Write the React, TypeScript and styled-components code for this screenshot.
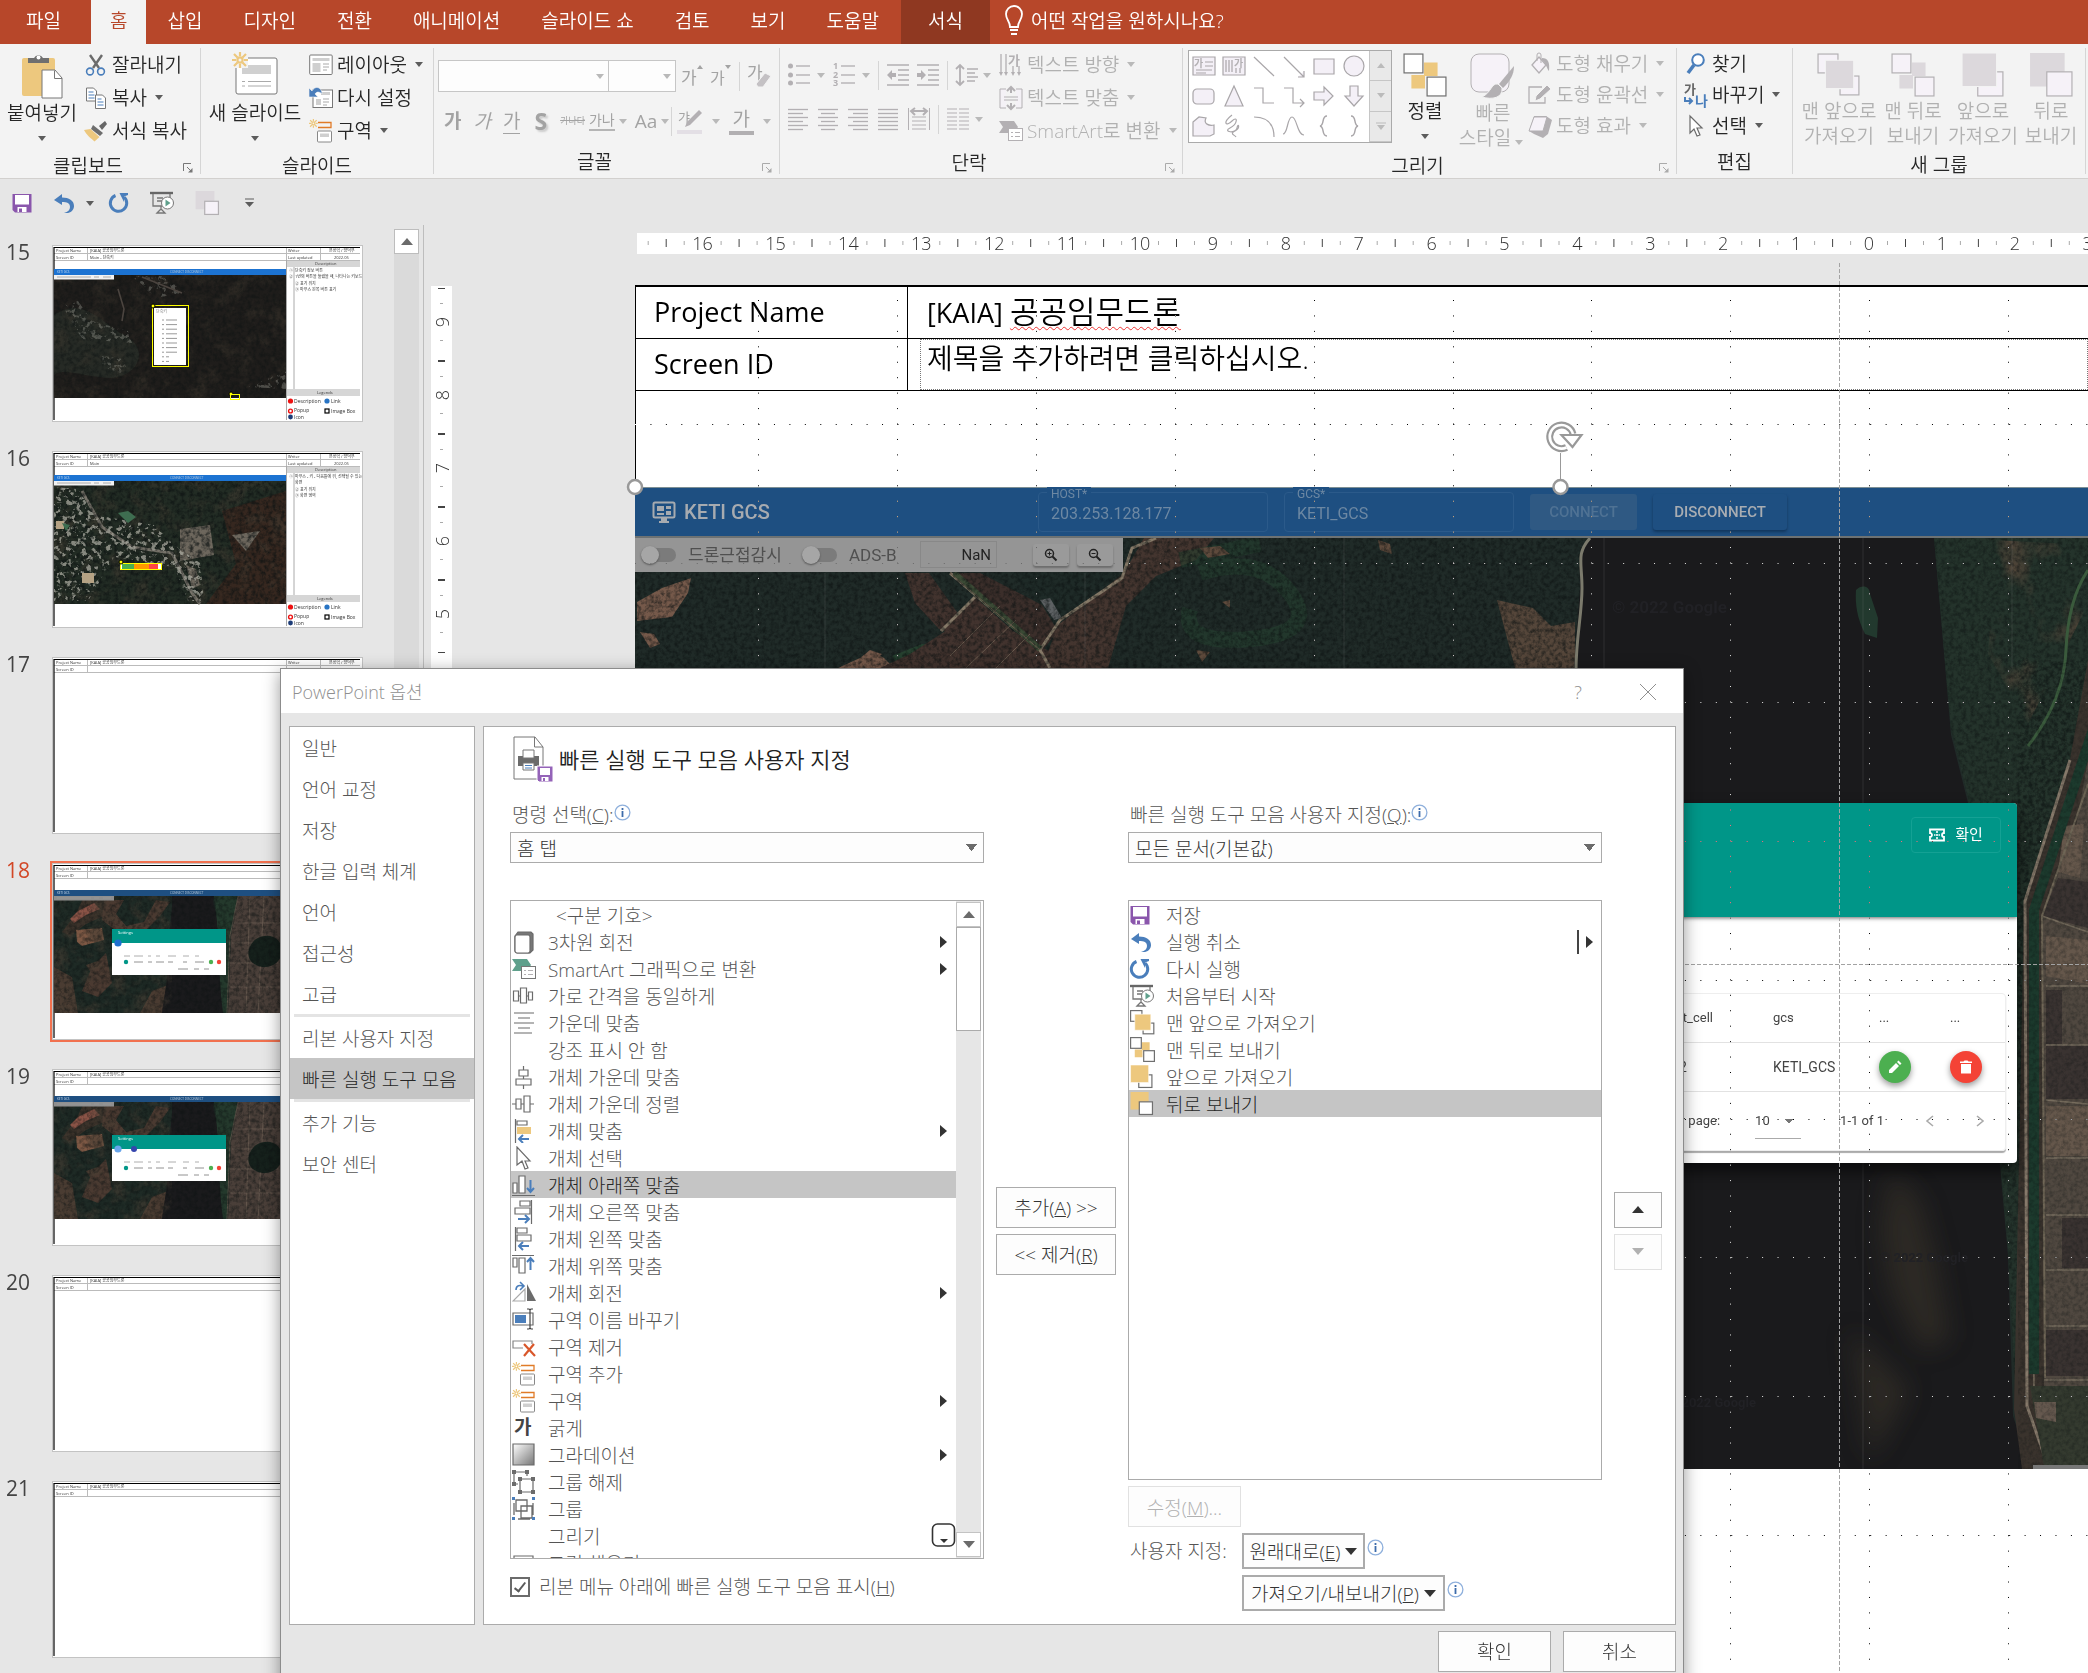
import React from "react";
import styled, { createGlobalStyle, css } from "styled-components";

const ink = "#262626";
const off = "#b1b1b1";
const blue = "#4a7ebb";
const gold = "#edc87e";
const line = "#ababab";

const GlobalStyle = createGlobalStyle`
  *, *::before, *::after { box-sizing: border-box; }
  body {
    margin: 0;
    overflow: hidden;
    background: #e6e6e6;
    color: ${ink};
    font-family: "Open Sans", "Noto Sans CJK KR", sans-serif;
    font-size: 19px;
    font-weight: 300;
    line-height: 24px;
  }
  button, input, select { font: inherit; color: inherit; }
  button { background: none; border: 0; padding: 0; margin: 0; white-space: nowrap; }
  ul, ol { list-style: none; margin: 0; padding: 0; }
  svg { display: block; flex: none; }
`;

/* ---------- frame ---------- */

const Window = styled.div`
  position: relative;
  display: flex;
  flex-direction: column;
  height: 100vh;
  overflow: hidden;
`;

const TabBar = styled.nav`
  display: flex;
  flex: none;
  height: 44px;
  background: #b7472a;
  font-weight: 350;
`;

const Tab = styled.button<{ $look?: "active" | "context" | "first" }>`
  padding: 0 20px 3px 21px;
  color: #fff;
  ${(p) => p.$look === "first" && css`width: 91px; padding-left: 16px;`}
  ${(p) => p.$look === "active" && css`background: #f3f3f3; color: #b7472a; padding-left: 19px; padding-right: 19px;`}
  ${(p) => p.$look === "context" && css`background: #8f3821; padding-left: 27px; padding-right: 27px; margin-left: 2px;`}
`;

const TellMe = styled.button`
  display: flex;
  align-items: center;
  gap: 7px;
  padding: 0 14px 3px;
  color: #fff;
`;

const Ribbon = styled.div`
  display: flex;
  flex: none;
  height: 135px;
  background: #f3f3f3;
  border-bottom: 1px solid #d2d0ce;
  overflow: hidden;
  font-weight: 350;
`;

const Group = styled.section<{ $w: number }>`
  position: relative;
  display: flex;
  flex-direction: column;
  flex: none;
  width: ${(p) => p.$w}px;
  margin: 4px 0;
  border-right: 1px solid #d5d5d5;
`;

const GroupBody = styled.div<{ $pad?: number }>`
  display: flex;
  height: 102px;
  padding-left: ${(p) => p.$pad ?? 0}px;
`;

const GroupName = styled.div<{ $launch?: boolean }>`
  text-align: center;
  line-height: 24px;
  padding: 4px ${(p) => (p.$launch ? 24 : 0)}px 0 0;
`;

const Launcher = styled.button`
  position: absolute;
  right: 7px;
  bottom: 1px;
`;

const Big = styled.button<{ $w: number; $off?: boolean }>`
  display: flex;
  flex-direction: column;
  align-items: center;
  width: ${(p) => p.$w}px;
  padding-top: 5px;
  line-height: 25px;
  color: ${(p) => (p.$off ? off : ink)};
  svg { margin-bottom: 2px; }
`;

const Stack = styled.div<{ $row?: number }>`
  display: grid;
  grid-auto-rows: ${(p) => p.$row ?? 33}px;
  align-content: start;
`;

const Small = styled.button<{ $off?: boolean }>`
  display: flex;
  align-items: center;
  gap: 4px;
  color: ${(p) => (p.$off ? off : ink)};
  svg { min-width: 24px; }
`;

const CaretBox = styled.span<{ $off?: boolean }>`
  display: inline-block;
  width: 0;
  height: 0;
  margin: 0 4px;
  border: 4px solid transparent;
  border-bottom-width: 0;
  border-top: 5px solid ${(p) => (p.$off ? "#b9b9b9" : "#5c5c5c")};
`;
const BigCaret = styled.span`
  display: flex;
  height: 24px;
  align-items: center;
  justify-content: center;
`;

const Tools = styled.div<{ $w?: number }>`
  display: flex;
  flex-direction: column;
  width: ${(p) => (p.$w ? `${p.$w}px` : "auto")};
`;

const ToolRow = styled.div<{ $h: number; $gap: number; $pad?: number }>`
  display: flex;
  align-items: center;
  height: ${(p) => p.$h}px;
  gap: ${(p) => p.$gap}px;
  padding-left: ${(p) => p.$pad ?? 0}px;
`;

const Rule = styled.span`
  width: 1px;
  height: 29px;
  background: #d5d5d5;
`;

const Glyph = styled.button<{ $kind?: "italic" | "under" | "shadow" | "bold" | "strike" | "arrows" | "bar" }>`
  color: #a3a3a3;
  font-weight: 400;
  line-height: 24px;
  ${(p) => p.$kind === "italic" && css`font-style: italic;`}
  ${(p) => p.$kind === "under" && css`border-bottom: 1px solid #a3a3a3;`}
  ${(p) => p.$kind === "bold" && css`font-weight: 700;`}
  ${(p) => p.$kind === "shadow" && css`font-size: 23px; font-weight: 700; text-shadow: 2px 2px 2px #ccc; padding: 0 1px 0 2px;`}
  ${(p) => p.$kind === "strike" && css`font-size: 9px; text-decoration: line-through;`}
  ${(p) => p.$kind === "arrows" && css`font-size: 14px; line-height: 18px; border-bottom: 2px solid #b5b5b5;`}
  ${(p) => p.$kind === "bar" && css`padding: 0 4px; border-bottom: 4px solid #b1afb1;`}
`;

const FontBoxes = styled.div`
  display: flex;
`;
const FontSelect = styled.div<{ $w: number }>`
  display: flex;
  align-items: center;
  width: ${(p) => p.$w}px;
  height: 32px;
  margin-right: -1px;
  border: 1px solid #c6c6c6;
  background: #fdfdfd;
  input { flex: 1; min-width: 0; height: 28px; border: 0; background: none; }
`;

const Gallery = styled.div`
  display: flex;
  width: 204px;
  height: 93px;
  margin-top: 2px;
  border: 1px solid #aaa;
  background: #fff;
`;
const GalleryGrid = styled.div`
  display: grid;
  flex: 1;
  grid-template-columns: repeat(6, 30px);
  grid-auto-rows: 30px;
  place-items: center;
`;
const GalleryScroll = styled.div`
  display: grid;
  width: 22px;
  grid-template-rows: repeat(3, 1fr);
  background: #e9e9e9;
  border-left: 1px solid #c6c6c6;
  button { display: grid; place-items: center; border-bottom: 1px solid #c6c6c6; }
`;

const QuickBar = styled.div`
  display: flex;
  flex: none;
  align-items: center;
  height: 46px;
  padding: 2px 12px 0;
  gap: 21px;
`;

const UndoPair = styled.span`
  display: flex;
  align-items: center;
  gap: 7px;
  margin-right: -10px;
`;

/* ---------- icons ---------- */

type SProps = { w: number; h: number; children: React.ReactNode; vb?: string };
const S = ({ w, h, vb, children }: SProps) => (
  <svg width={w} height={h} viewBox={vb ?? `0 0 ${w} ${h}`} fill="none" overflow="visible" aria-hidden="true">
    {children}
  </svg>
);

const Caret = ({ disabled }: { disabled?: boolean }) => <CaretBox $off={disabled} />;

const LaunchIcon = ({ c = "#777" }) => (
  <S w={10} h={10}>
    <path d="M.5 8V.5H8" stroke={c} />
    <path d="M4 4l4 4" stroke={c} />
    <path d="M9.500 5v4.500H5z" fill={c} />
  </S>
);

const SaveIcon = () => (
  <S w={20} h={20}>
    <path d="M.5 1h19v18.500H3L.5 17z" fill="#8a56ac" />
    <path d="M3 2h14v9.500H3z" fill="#fff" />
    <path d="M5.500 14h9v5h-9z" fill="#fff" />
    <path d="M7 15.500h3V19H7z" fill="#8a56ac" />
  </S>
);
const UndoIcon = () => (
  <S w={22} h={20}>
    <path d="M1 7l8-6v3.500c7 0 12 3 12 8.500 0 3-2 6-6 7h-4c4-1 6-3 6-6 0-4-3-5-8-5V12z" fill={blue} />
  </S>
);
const RedoIcon = () => (
  <S w={20} h={20}>
    <path d="M6.500 2.500A8.200 8.200 0 1 0 15 4" stroke={blue} strokeWidth="3" />
    <path d="M10.500 0H19v2l-4 1.500V9z" fill={blue} />
  </S>
);
const ShowIcon = () => (
  <S w={24} h={22}>
    <path d="M0 1h23" stroke="#666" strokeWidth="2.400" />
    <path d="M3 2v12h9M20 2v4M7 6h6M7 9h5M11 14v4M7 21l4-4 4 4z" stroke="#777" strokeWidth="1.300" />
    <circle cx="17.500" cy="11" r="6" fill="#fff" stroke="#777" />
    <path d="M15.500 7.500l5 3.500-5 3.500z" fill="#5fa08c" />
  </S>
);
const PasteIcon = () => (
  <S w={42} h={46}>
    <rect x="1" y="5" width="33" height="38" rx="2" fill={gold} />
    <path d="M7 10V5h6a5 5 0 0 1 9 0h6v5z" fill="#6f6f6f" />
    <circle cx="17.500" cy="4.500" r="2" fill="#fff" />
    <path d="M21 17h13l7 8v20H21z" fill="#fff" stroke="#777" />
    <path d="M33.500 17.500v8H41" stroke="#777" />
  </S>
);
const CutIcon = () => (
  <S w={22} h={22}>
    <path d="M5 1l9 13M17 1L8 14" stroke="#6b6b6b" strokeWidth="2.400" />
    <circle cx="5" cy="17.500" r="3.400" stroke={blue} strokeWidth="1.600" />
    <circle cx="16" cy="17.500" r="3.400" stroke={blue} strokeWidth="1.600" />
  </S>
);
const CopyIcon = () => (
  <S w={22} h={22}>
    <path d="M1.500 1h7l3 3v10h-10z" fill="#fff" stroke="#777" />
    <path d="M3.500 5h5M3.500 8h6M3.500 11h6" stroke={blue} />
    <path d="M10.500 8h7l3 3v10.500h-10z" fill="#fff" stroke="#777" />
    <path d="M12.500 12h4M12.500 15h6M12.500 18h6" stroke={blue} />
  </S>
);
const BrushIcon = () => (
  <S w={24} h={22}>
    <path d="M15 6l6-5 2 3-5 6z" fill="#666" />
    <path d="M9 5l10 8-3 3L7 9z" fill="#6d6d6d" />
    <path d="M6.500 9l9 8-5 4.500C7 18 3 16 0 10z" fill={gold} />
  </S>
);
const Burst = ({ x = 0, y = 0, s = 1 }) => (
  <g transform={`translate(${x} ${y}) scale(${s})`} stroke={gold} strokeWidth="2.200">
    <circle cx="8" cy="8" r="2.600" />
    <path d="M8 0v4M8 12v4M0 8h4M12 8h4M2 2l3.500 3.500M14 2l-3.500 3.500M2 14l3.500-3.500M14 14l-3.500-3.500" />
  </g>
);
const NewSlideIcon = () => (
  <S w={46} h={46}>
    <rect x="4" y="5" width="41" height="36" rx="2" fill="#fff" stroke="#777" />
    <path d="M10 12h29v9H10z" fill="#d0d0d0" />
    <path d="M10 28.500h3M16 28.500h23M10 33h3M16 33h23" stroke="#aaa" />
    <path d="M0 0h16v15H0z" fill="#f3f3f3" />
    <Burst y={-1} />
  </S>
);
const LayoutIcon = () => (
  <S w={24} h={22}>
    <rect x=".7" y="1" width="22.500" height="19.500" rx="1" fill="#fff" stroke="#777" />
    <path d="M3.500 4h17v3h-17zM3.500 9h8v9h-8z" fill="#cfcfcf" />
    <path d="M14 10h6M14 13h6M14 16h4" stroke="#aaa" />
  </S>
);
const ResetIcon = () => (
  <S w={24} h={22}>
    <rect x="4" y="3" width="19.500" height="17.500" fill="#fff" stroke="#777" />
    <path d="M12 5h9v3h-9zM7 12h5v6H7z" fill="#cfcfcf" />
    <path d="M14 12h6M14 15h6M14 18h4" stroke="#aaa" />
    <path d="M0 1v9h9L6 7c2-3 5-2 7 0 0-7-7-9-10-3z" fill={blue} stroke="#f3f3f3" strokeWidth=".6" />
  </S>
);
const SectionIcon = () => (
  <S w={24} h={24}>
    <Burst s={0.55} />
    <path d="M9 3.500h13v5H9" stroke="#e07b28" strokeWidth="1.300" />
    <rect x="8.500" y="12" width="14" height="11" rx="1" fill="#fff" stroke="#888" />
    <path d="M11 14.500h9v3.500h-9z" fill="#cfcfcf" />
  </S>
);
const grey = "#b3b0b3";
const Lines = ({ rows, w = 22, h = 22, c = grey }: { rows: number[][]; w?: number; h?: number; c?: string }) => (
  <S w={w} h={h}>
    {rows.map(([x1, x2], i) => (
      <path key={i} d={`M${x1} ${1 + i * 4}.500H${x2}`} stroke={c} strokeWidth="1.300" />
    ))}
  </S>
);
const BulletIcon = () => (
  <S w={22} h={24}>
    {[3, 12, 20].map((y) => (
      <g key={y}>
        <circle cx="2.500" cy={y} r="2.500" fill={grey} />
        <path d={`M8 ${y}h14`} stroke={grey} strokeWidth="1.400" />
      </g>
    ))}
  </S>
);
const NumberIcon = () => (
  <S w={22} h={24}>
    {[3, 12, 20].map((y, i) => (
      <g key={y}>
        <text x="0" y={y + 3} fontSize="9" fontWeight="700" fill={grey}>{i + 1}</text>
        <path d={`M8 ${y}h14`} stroke={grey} strokeWidth="1.400" />
      </g>
    ))}
  </S>
);
const IndentIcon = ({ out }: { out?: boolean }) => (
  <S w={22} h={22}>
    <path d="M0 1h22M11 6h11M11 11h11M11 16h11M0 21h22" stroke={grey} strokeWidth="1.300" />
    {out ? <path d="M0 11l5-5v3h4v4H5v3z" fill={grey} /> : <path d="M9 11L4 6v3H0v4h4v3z" fill={grey} />}
  </S>
);
const SpacingIcon = () => (
  <S w={22} h={24}>
    <path d="M4 2v20M0 6l4-4 4 4M0 18l4 4 4-4" stroke={grey} strokeWidth="1.800" />
    <path d="M11 6h11M11 10h8M11 14h11M11 18h8" stroke={grey} strokeWidth="1.300" />
  </S>
);
const SpreadIcon = () => (
  <S w={22} h={24}>
    <path d="M.5 1v22M21.500 1v22M4 10h14M4 14h14M4 18h14M4 22h14" stroke={grey} />
    <path d="M3 4h16M7 1L3 4l4 4M15 1l4 3-4 4" stroke={grey} strokeWidth="2" />
  </S>
);
const ColumnsIcon = () => (
  <S w={22} h={22}>
    {[1, 5, 9, 13, 17, 21].map((y) => (
      <path key={y} d={`M0 ${y}h10M12 ${y}h10`} stroke={grey} strokeWidth="1.200" />
    ))}
  </S>
);
const DirIcon = () => (
  <S w={24} h={24}>
    <path d="M2 1v20M7 1v20M14 13v8M20 13v8" stroke={grey} strokeWidth="1.300" />
    <path d="M0 19l2 4 2-4zM5 19l2 4 2-4zM12 19l2 4 2-4zM18 19l2 4 2-4z" fill={grey} />
    <text x="9" y="12" fontSize="13" fontWeight="700" fill={grey}>가</text>
  </S>
);
const FitIcon = () => (
  <S w={24} h={24}>
    <path d="M7 3H1v19h6M17 3h6v19h-6" stroke={grey} fill="#f4f1f6" />
    <path d="M12 1v6M8 5l4-4 4 4M12 23v-6M8 19l4 4 4-4" stroke={grey} strokeWidth="2" />
    <path d="M5 11h14M5 14h14" stroke={grey} />
  </S>
);
const SmartIcon = ({ c = grey }: { c?: string }) => (
  <S w={24} h={20}>
    <path d="M0 0h15l4 6-4 6H0l4-6z" fill={c} />
    <rect x="9.500" y="7.500" width="14" height="12" fill="#fff" stroke={c === grey ? grey : "#777"} />
    <path d="M12 11.500h2M16 11.500h5M12 15.500h2M16 15.500h5" stroke={grey} />
  </S>
);

type SheetProps = { kind: "align" | "front" | "back" | "forward" | "backward"; dim?: boolean; size?: number };
const SheetIcon = ({ kind, dim, size = 42 }: SheetProps) => {
  const f = dim ? "#dcd8dc" : gold;
  const p = dim ? "#f6f2f8" : "#fff";
  const s = dim ? grey : "#6f6f6f";
  const k = 42 / size;
  const paper = (x: number, y: number, w: number, h: number) => (
    <rect x={x} y={y} width={w} height={h} fill={p} stroke={s} strokeWidth={1.2 * k} />
  );
  return (
    <S w={size} h={size} vb="0 0 42 42">
      {kind === "front" && <>{paper(1, 1, 19, 18)}{paper(22, 22, 18, 18)}<path d="M8 7h27v27H8z" fill={f} stroke={dim ? "#f3f3f3" : "#fff"} /></>}
      {(kind === "back" || kind === "align") && <><path d="M20 9h13v13H20zM8 21h13v13H8z" fill={f} />{paper(1, 1, 18, 18)}{paper(23, 23, 18, 18)}</>}
      {kind === "forward" && <>{paper(16, 18, 24, 23)}<path d="M1 0h33v32H1z" fill={f} stroke={dim ? "#f3f3f3" : "#fff"} /></>}
      {kind === "backward" && <><path d="M1 0h33v32H1z" fill={f} />{paper(17, 18, 24, 23)}</>}
    </S>
  );
};
const StyleIcon = () => (
  <S w={46} h={46}>
    <rect x="1" y="1" width="38" height="38" rx="8" fill="#f6f2f8" stroke={grey} />
    <path d="M44 13L29 31l4 4c7-7 11-13 11-22z" fill={grey} />
    <path d="M28 31c-7-1-6 8-16 13 10 3 21 1 20-9z" fill={grey} stroke="#f3f3f3" />
  </S>
);
const FillIcon = () => (
  <S w={24} h={24}>
    <path d="M4 13L11 5l7 8-7 8z" stroke={grey} fill="#f6f2f8" strokeWidth="1.300" />
    <path d="M9 9V3a2 2 0 0 1 4 0v8" stroke={grey} />
    <path d="M14 6c6 0 8 4 7 13-2-2-2-6-7-11z" fill={grey} />
  </S>
);
const OutlineIcon = () => (
  <S w={24} h={22}>
    <path d="M14 3H1v16h16v-6" stroke={grey} strokeWidth="1.300" />
    <path d="M8 12L19 1l4 4-11 10-5 2z" fill={grey} stroke="#f3f3f3" />
  </S>
);
const EffectIcon = () => (
  <S w={24} h={24}>
    <path d="M6 20L1 17 6 2h12l6 4-4 14-5 4z" fill={grey} />
    <path d="M6 3h13l-4 14H1z" fill="#f6f2f8" stroke={grey} />
  </S>
);
const FindIcon = () => (
  <S w={20} h={22}>
    <circle cx="12" cy="7" r="5.800" stroke={blue} strokeWidth="2" fill="#fff" />
    <path d="M8 12l-6 8" stroke={blue} strokeWidth="3.600" />
  </S>
);
const SwapIcon = () => (
  <S w={24} h={26}>
    <text x="0" y="12" fontSize="13" fontWeight="700" fill="#666">가</text>
    <text x="11" y="24" fontSize="14" fontWeight="700" fill={blue}>나</text>
    <path d="M1 15v4h6M5 16l3 3-3 3" stroke={blue} strokeWidth="2" />
  </S>
);
const CursorIcon = ({ w = 16, h = 24 }) => (
  <S w={w} h={h} vb="0 0 16 24">
    <path d="M2 2v17l4-4 3 7 3-1-3-7h5z" fill="#fff" stroke="#6b6b6b" strokeWidth="1.200" />
  </S>
);

const shapePaths: React.ReactNode[] = [
  <g key="a"><path d="M1 3h22v18H1z" /><path d="M13 8h8M13 12h8M4 16h16M4 19h10" /><text x="2" y="13" fontSize="10" fill={grey} stroke="none" fontWeight="700">가</text></g>,
  <g key="b"><path d="M1 3h22v18H1z" /><path d="M4 6v12M7 6v12M10 6v12M14 14v5M18 14v5" /><text x="12" y="13" fontSize="10" fill={grey} stroke="none" fontWeight="700">가</text></g>,
  <path key="c" d="M2 3l20 19" />,
  <path key="d" d="M2 3l20 20M22 17v6h-6" />,
  <path key="e" d="M2 5h20v15H2z" />,
  <circle key="f" cx="12" cy="12" r="10" />,
  <rect key="g" x="1" y="5" width="21" height="15" rx="4" />,
  <path key="h" d="M12 2l9 20H3z" />,
  <path key="i" d="M2 4h9v15h11" fill="none" />,
  <path key="j" d="M2 4h9v15h11M18 15l4 4-4 4" fill="none" />,
  <path key="k" d="M2 8h10V3l9 9-9 9v-5H2z" />,
  <path key="l" d="M8 2h8v10h5l-9 10-9-10h5z" />,
  <path key="m" d="M1 8l6-5 7 1c-3 6 3 8 8 7v9l-4 2H1z" />,
  <path key="n" d="M10 1c-10 8-6 12 0 6s6 3-2 7 6 6 7 0 4 0-2 3 0 4 1 6" fill="none" />,
  <path key="o" d="M2 3c14 0 20 8 20 20" fill="none" />,
  <path key="p" d="M1 20C6 20 5 3 10 3s5 18 12 18" fill="none" />,
  <path key="q" d="M15 2c-6 0-2 9-7 10 5 1 1 10 7 10" fill="none" strokeWidth="1.500" />,
  <path key="r" d="M9 2c6 0 2 9 7 10-5 1-1 10-7 10" fill="none" strokeWidth="1.500" />,
];

/* ---------- workspace ---------- */

const Workspace = styled.div`
  display: flex;
  flex: 1;
  min-height: 0;
`;

const ThumbPane = styled.aside`
  display: flex;
  flex: none;
  width: 424px;
  padding-top: 4px;
  border-right: 1px solid #bdbdbd;
  overflow: hidden;
`;

const ThumbList = styled.ol`
  flex: 1;
  padding-top: 14px;
`;

const ThumbItem = styled.li<{ $on?: boolean }>`
  display: flex;
  height: 206px;
  color: ${(p) => (p.$on ? "#d24726" : "#444")};
`;
const ThumbNo = styled.span`
  width: 50px;
  padding-left: 6px;
  font-size: 21px;
  font-weight: 400;
  line-height: 18px;
`;
const ThumbFrame = styled.button<{ $on?: boolean }>`
  width: 315px;
  height: 181px;
  border: ${(p) => (p.$on ? "3px solid #f1714f" : "0")};
  padding: ${(p) => (p.$on ? 0 : 3)}px;
  svg { outline: 1px solid #c3c3c3; background: #fff; }
`;

const PaneScroll = styled.div`
  width: 25px;
  margin-right: 4px;
  background: #dadada;
  button {
    display: grid;
    place-items: center;
    width: 25px;
    height: 25px;
    background: #fff;
    border: 1px solid #bdbdbd;
  }
`;

const Editor = styled.main`
  display: flex;
  flex: 1;
  min-width: 0;
  padding-left: 7px;
`;
const RulerV = styled.div`
  width: 21px;
  margin-top: 61px;
  background: #fff;
`;
const Stage = styled.div`
  display: flex;
  flex-direction: column;
  flex: 1;
  min-width: 0;
  margin-left: 183px;
  padding-top: 8px;
`;
const RulerH = styled.div`
  height: 21px;
  margin: 0 0 31px 2px;
  background: #fff;
  flex: none;
`;
const Slide = styled.div`
  position: relative;
  flex: 1;
  background: #fff;
`;
const Info = styled.table`
  width: 100%;
  border-collapse: collapse;
  table-layout: fixed;
  color: #000;
  font-size: 27px;
  font-weight: 350;
  line-height: 36px;
  border-left: 1px solid #000;
  border-top: 2px solid #000;
  th { width: 272px; font-weight: 400; text-align: left; padding: 0 18px; border: 1px solid #000; }
  tr { height: 52px; }
  td { border: 1px solid #000; border-right: 0; padding: 0 0 0 19px; }
`;
const Latin = styled.span`
  font-weight: 400;
`;
const Misspelt = styled.span`
  font-size: 31px;
  text-decoration: underline wavy #e33 1px;
  text-underline-offset: 3px;
`;
const Holder = styled.div`
  height: 51px;
  margin-left: -7px;
  border: 1px dotted #777;
  padding: 0 0 0 6px;
  font-size: 28px;
`;
const Blank = styled.div`
  height: 96px;
  border-left: 1px solid #000;
`;
const Overlay = styled.svg`
  position: absolute;
  inset: 0;
  width: 100%;
  height: 100%;
  overflow: visible;
  pointer-events: none;
`;

/* picture on the slide */
const Shot = styled.div`
  font-family: Roboto, "Noto Sans CJK KR", sans-serif;
  font-weight: 400;
  overflow: hidden;
`;
const ShotBar = styled.div`
  display: flex;
  align-items: center;
  gap: 16px;
  height: 51px;
  background: #1e4f81;
  border-top: 1px solid #7d8f94;
  border-bottom: 2px solid #6d7273;
`;
const Brand = styled.div`
  display: flex;
  align-items: center;
  gap: 8px;
  width: 387px;
  padding-left: 17px;
  color: #a7abb0;
  font-size: 20px;
  font-weight: 500;
`;
const Field = styled.div`
  position: relative;
  width: 230px;
  height: 40px;
  border: 1px solid #2b5a8a;
  border-radius: 4px;
  color: #6d88a3;
  label {
    position: absolute;
    top: -7px;
    left: 8px;
    padding: 0 4px;
    background: #1e4f81;
    font-size: 12px;
    line-height: 16px;
  }
  input { width: 100%; height: 38px; padding: 3px 12px 0; border: 0; background: none; font-size: 16px; }
`;
const ShotButton = styled.button<{ $dim?: boolean }>`
  width: ${(p) => (p.$dim ? 107 : 134)}px;
  height: 36px;
  border-radius: 3px;
  font-size: 15px;
  font-weight: 500;
  background: ${(p) => (p.$dim ? "#2f5983" : "#1e4f81")};
  color: ${(p) => (p.$dim ? "#4f7294" : "#a9adb2")};
  box-shadow: ${(p) => (p.$dim ? "none" : "0 2px 3px #12365c")};
`;
const MapArea = styled.div`
  position: relative;
  height: 931px;
  background: #1c2624;
  overflow: hidden;
`;
const MapArt = styled.svg`
  position: absolute;
  inset: 0;
  width: 100%;
  height: 100%;
`;
const MapTools = styled.div`
  position: relative;
  display: flex;
  align-items: center;
  width: 488px;
  height: 34px;
  padding-left: 6px;
  background: #959595;
  color: #505050;
  font-size: 17px;
`;
const Switch = styled.label<{ $w: number }>`
  display: flex;
  align-items: center;
  gap: 12px;
  width: ${(p) => p.$w}px;
  input {
    position: relative;
    appearance: none;
    width: 35px;
    height: 14px;
    margin: 0;
    border-radius: 7px;
    background: #7b7b7b;
  }
  input::before {
    content: "";
    position: absolute;
    left: 0;
    top: -2px;
    width: 18px;
    height: 18px;
    border-radius: 9px;
    background: #a6a6a6;
    box-shadow: 0 1px 2px #555;
  }
`;
const NaNBox = styled.input`
  width: 77px;
  height: 27px;
  margin-right: 36px;
  padding: 0 5px;
  border: 1px solid #888;
  background: none;
  text-align: right;
  font-size: 15px;
  color: #222;
`;
const ZoomButton = styled.button`
  display: grid;
  place-items: center;
  width: 36px;
  height: 22px;
  margin-right: 8px;
  border-radius: 3px;
  background: #9a9a9a;
  box-shadow: 0 2px 2px #6c6c6c;
`;
const Settings = styled.section`
  position: absolute;
  top: 265px;
  right: 71px;
  width: 760px;
  background: #fff;
  border-radius: 4px;
  overflow: hidden;
  box-shadow: 0 8px 16px rgba(0, 0, 0, 0.6);
  color: #444;
  font-size: 13px;
`;
const SettingsHead = styled.div`
  display: flex;
  justify-content: flex-end;
  height: 114px;
  padding: 14px 16px;
  background: #009688;
  box-shadow: 0 1px 4px rgba(0, 0, 0, 0.6);
`;
const Confirm = styled.button`
  display: flex;
  align-items: center;
  justify-content: center;
  gap: 10px;
  width: 90px;
  height: 36px;
  border: 1px solid #14a194;
  border-radius: 4px;
  color: #fff;
  font-size: 15px;
`;
const Card = styled.div`
  margin: 76px 11px 12px;
  border: 1px solid #eee;
  border-radius: 4px;
  box-shadow: 0 2px 1px #aaa;
`;
const GcsTable = styled.table`
  width: 100%;
  border-collapse: collapse;
  table-layout: fixed;
  th, td { height: 49px; padding: 0; text-align: left; border-bottom: 1px solid #e2e2e2; font-weight: 400; }
  td { font-size: 14px; }
  th:nth-child(2), td:nth-child(2) { width: 106px; }
  th:nth-child(3), td:nth-child(3) { width: 71px; }
  th:nth-child(4), td:nth-child(4) { width: 55px; }
  th:first-child { padding-right: 60px; text-align: right; }
  td:first-child { padding-right: 86px; text-align: right; }
`;
const Round = styled.button<{ $c: string }>`
  display: grid;
  place-items: center;
  width: 32px;
  height: 32px;
  border-radius: 16px;
  background: ${(p) => p.$c};
  box-shadow: 0 3px 6px rgba(0, 0, 0, 0.4);
`;
const Pager = styled.div`
  display: flex;
  align-items: center;
  justify-content: flex-end;
  height: 58px;
  padding-right: 21px;
  select {
    appearance: none;
    width: 46px;
    height: 36px;
    margin: 0 39px 0 35px;
    border: 0;
    border-bottom: 1px solid #aaa;
    background: conic-gradient(from -45deg at 50% 100%, #777 90deg, transparent 0) 29px 16px / 10px 5px no-repeat;
    background: linear-gradient(to top right, transparent 50%, #777 50%) 29px 16px / 5px 5px no-repeat,
      linear-gradient(to top left, transparent 50%, #777 50%) 34px 16px / 5px 5px no-repeat;
  }
  button { margin-left: 42px; color: #aaa; font-size: 22px; }
`;

/* ---------- options dialog ---------- */

const Dialog = styled.div`
  position: absolute;
  top: 668px;
  left: 280px;
  width: 1404px;
  height: 1020px;
  background: #e6e6e6;
  border: 1px solid #8c8c8c;
  box-shadow: 0 4px 16px rgba(0, 0, 0, 0.4);
  color: #555;
`;
const DialogTitle = styled.header`
  display: flex;
  align-items: center;
  height: 44px;
  padding: 1px 25px 0 11px;
  background: #fff;
  color: #8f8f8f;
  font-size: 18px;
  h1 { flex: 1; margin: 0; font-size: 18px; font-weight: 300; }
  button { width: 70px; height: 30px; display: grid; place-items: center; margin: 0; }
  button:last-child { width: 20px; margin-left: 25px; }
`;
const DialogBody = styled.div`
  display: flex;
  gap: 8px;
  margin: 13px 7px 0 8px;
`;
const OptionNav = styled.nav`
  width: 186px;
  background: #fff;
  border: 1px solid ${line};
`;
const OptionLink = styled.button<{ $on?: boolean }>`
  display: block;
  width: 100%;
  height: 41px;
  padding: 3px 0 0 12px;
  text-align: left;
  background: ${(p) => (p.$on ? "#c5c5c5" : "none")};
  color: ${(p) => (p.$on ? ink : "#555")};
`;
const NavRule = styled.hr`
  height: 3px;
  margin: 0 4px;
  border: 0;
  background: #e4e4e4;
`;
const OptionPanel = styled.div`
  flex: 1;
  height: 899px;
  padding: 9px 13px 0 26px;
  background: #fff;
  border: 1px solid ${line};
`;
const PanelTitle = styled.h2`
  display: flex;
  align-items: center;
  gap: 6px;
  height: 46px;
  margin: 0;
  padding-left: 3px;
  color: #222;
  font-size: 22px;
  font-weight: 350;
`;
const Columns = styled.div`
  display: grid;
  grid-template-columns: 1fr 120px 1fr 48px;
  gap: 37px 12px;
  align-items: start;
  margin-top: 21px;
`;
const LeftStack = styled.div`
  grid-column: 1;
`;
const Picker = styled.div<{ $col: number }>`
  grid-column: ${(p) => p.$col};
  label { display: flex; height: 29px; align-items: center; padding: 0 0 6px 2px; }
  label svg { margin-bottom: 4px; }
`;
const Select = styled.select`
  appearance: none;
  display: block;
  width: 100%;
  height: 31px;
  padding: 2px 8px 0 6px;
  border: 1px solid ${line};
  border-radius: 0;
  color: #333;
  background: conic-gradient(from -40deg at 50% 100%, #6b6b6b 80deg, transparent 0) right 5px top 11px / 13px 7px no-repeat #fdfdfd;
`;
const ListFrame = styled.div<{ $h: number }>`
  display: flex;
  height: ${(p) => p.$h}px;
  border: 1px solid ${line};
  overflow: hidden;
  background: #fff;
  ul { flex: 1; min-width: 0; }
`;
const Row = styled.button<{ $on?: boolean }>`
  display: flex;
  align-items: center;
  width: 100%;
  height: 27px;
  text-align: left;
  background: ${(p) => (p.$on ? "#c5c5c5" : "none")};
  color: ${(p) => (p.$on ? ink : "#555")};
`;
const RowIcon = styled.span`
  display: flex;
  flex: none;
  width: 37px;
  padding-left: 1px;
`;
const RowText = styled.span<{ $in?: boolean }>`
  flex: 1;
  padding-left: ${(p) => (p.$in ? 8 : 0)}px;
  padding-top: 2px;
`;
const SubArrow = styled.span<{ $split?: boolean }>`
  display: flex;
  align-items: center;
  height: 24px;
  padding-left: ${(p) => (p.$split ? 7 : 0)}px;
  margin-right: ${(p) => (p.$split ? 8 : 9)}px;
  border-left: ${(p) => (p.$split ? "2px solid #444" : "0")};
`;
const Bar = styled.div`
  display: flex;
  flex-direction: column;
  justify-content: space-between;
  width: 27px;
  padding: 1px 2px 1px 0;
  background: linear-gradient(#e6e6e6, #e6e6e6) 0 0 / 25px 100% no-repeat;
  button { display: grid; place-items: center; width: 25px; height: 25px; border: 1px solid #c3c3c3; background: #fff; }
`;
const BarThumb = styled.div`
  height: 104px;
  border: 1px solid ${line};
  background: #fff;
`;
const Push = styled.button<{ $w: number; $h?: number; $dim?: boolean; $thick?: boolean }>`
  display: flex;
  align-items: center;
  justify-content: center;
  gap: 5px;
  width: ${(p) => p.$w}px;
  height: ${(p) => p.$h ?? 41}px;
  border: ${(p) => (p.$thick ? 2 : 1)}px solid ${(p) => (p.$dim ? "#e1e1e1" : line)};
  background: #fdfdfd;
  color: ${(p) => (p.$dim ? off : "#333")};
  span { padding-top: 2px; }
`;
const Middle = styled.div`
  display: flex;
  flex-direction: column;
  justify-content: center;
  gap: 6px;
  height: 661px;
`;
const RightStack = styled.div`
  display: flex;
  flex-direction: column;
  gap: 6px;
`;
const CustomRow = styled.div`
  display: grid;
  grid-template-columns: 112px auto 1fr;
  gap: 6px 2px;
  align-items: center;
  > span { padding-left: 2px; }
  > svg { margin-bottom: 8px; }
`;
const ExportRow = styled.div`
  grid-column: 2 / 4;
  display: flex;
  align-items: center;
  gap: 2px;
  > svg { margin-bottom: 8px; }
`;
const Check = styled.label`
  display: flex;
  align-items: center;
  gap: 9px;
  margin-top: 16px;
  input {
    appearance: none;
    display: grid;
    place-items: center;
    width: 20px;
    height: 20px;
    margin: 0;
    border: 2px solid #6b6b6b;
    background: #fff;
  }
  input:checked::before {
    content: "";
    width: 6px;
    height: 12px;
    border: solid #5a5a5a;
    border-width: 0 2px 2px 0;
    transform: translateY(-1px) rotate(38deg);
  }
`;
const DialogFoot = styled.footer`
  display: flex;
  justify-content: flex-end;
  gap: 12px;
  padding: 6px 7px 0 0;
`;

const InfoIcon = () => (
  <S w={17} h={17}>
    <circle cx="8.500" cy="8.500" r="7.400" stroke="#8fb0dc" fill="#fff" strokeWidth="1.300" />
    <path d="M8.500 7v6M8.500 4v2" stroke="#3d6cab" strokeWidth="1.800" />
  </S>
);
const Tri = ({ d = "down", c = "#6b6b6b", w = 12, h = 7 }: { d?: "up" | "down" | "right"; c?: string; w?: number; h?: number }) => (
  <svg width={w} height={h} viewBox="0 0 10 10" preserveAspectRatio="none" aria-hidden="true">
    <path d={d === "up" ? "M5 0l5 10H0z" : d === "right" ? "M0 0l10 5-10 5z" : "M0 0h10L5 10z"} fill={c} />
  </svg>
);

/* small icons for the command list, all on a 24 x 24 field */
const I = ({ children }: { children: React.ReactNode }) => (
  <svg width="24" height="24" viewBox="0 0 24 24" fill="none" stroke="#6b6b6b" strokeWidth="1.200" aria-hidden="true">
    {children}
  </svg>
);
const ic = {
  cube: <I><path d="M3 6l3-4h13l2 2v16l-3 3H5l-2-2z" fill="#777" /><rect x="3" y="5" width="15" height="18" rx="2" fill="#fff" /></I>,
  smart: <SmartIcon c="#5fa08c" />,
  spread: <I><path d="M1.500 7v10h5V7zM8.500 4v15h6V4zM16.500 8v8h4V8zM6 12h3M14 12h3" /></I>,
  center: <I><path d="M2 2h20M6 7h12M2 12h20M6 17h12M2 22h18" /></I>,
  ctrV: <I><path d="M7 5h9v6H7zM4 14h15v6H4zM11.500 1v4M11.500 11v3M11.500 20v4" /></I>,
  ctrH: <I><path d="M4 7h5v10H4zM12 4h6v16h-6zM0 12h4M9 12h3M18 12h4" /></I>,
  left: <I><path d="M3.500 0v24M5 2h10v4H5z" /><path d="M5 8h14v7H5z" fill={gold} stroke="none" /><path d="M17 20H7M11 16l-4 4 4 4" stroke={blue} strokeWidth="2" /></I>,
  cursor: <I><path d="M5 1v18l5-4 3 8 3-1-3-7h5z" fill="#fff" /></I>,
  bottom: <I><path d="M0 22.500h23M1 10h4v10H1zM7 3h6v17H7z" fill="#fff" /><path d="M18.500 7v12M15 15l3.500 4 3.500-4" stroke={blue} strokeWidth="2" /></I>,
  right: <I><path d="M19.500 0v24M8 1h10v5H8zM3 8h15v6H3z" /><path d="M6 19h10M13 15l4 4-4 4" stroke={blue} strokeWidth="2" /></I>,
  leftO: <I><path d="M3.500 0v24M5 1h10v5H5zM5 8h14v6H5z" /><path d="M17 19H7M11 15l-4 4 4 4" stroke={blue} strokeWidth="2" /></I>,
  top: <I><path d="M0 1.500h22M1 4h4v9H1zM7 4h6v15H7z" /><path d="M18.500 16V4M15 8l3.500-4 3.500 4" stroke={blue} strokeWidth="2" /></I>,
  rotate: <I><path d="M1 20h12V8z" stroke="#aaa" /><path d="M15 3v17h9z" fill="#6b6b6b" stroke="none" /><path d="M4 9c0-5 4-5 7-4M8 1l4 4-4 4" stroke={blue} strokeWidth="1.600" /></I>,
  rename: <I><path d="M1 5h20v12H1z" /><path d="M3 7h11v8H3z" fill={blue} stroke="none" /><path d="M18 2v18M15 1h2l1 1 1-1h2M15 21h2l1-1 1 1h2" stroke="#444" /></I>,
  remove: <I><path d="M11 13H1V6h19v3" stroke="#888" /><path d="M12 9l11 12M22 9L12 21" stroke="#d9572b" strokeWidth="2.200" /></I>,
  section: <SectionIcon />,
  bold: <svg width="24" height="24" viewBox="0 0 24 24" overflow="visible" aria-hidden="true"><text x="2" y="18" fontSize="19" fontWeight="700" fill="#444">가</text></svg>,
  gradient: <I><defs><linearGradient id="gr" x2="1" y2="1"><stop stopColor="#fff" /><stop offset="1" stopColor="#777" /></linearGradient></defs><path d="M1 1h21v21H1z" fill="url(#gr)" /></I>,
  ungroup: <I><path d="M2 14V2h13v4M8 9h13v13H8zM2 14h4" /><path d="M0 0h4v4H0zM13 0h4v4h-4zM0 12h4v4H0zM6 7h4v4H6zM19 7h4v4h-4zM6 20h4v4H6zM19 20h4v4h-4z" fill="#6b6b6b" stroke="none" /></I>,
  group: <I><path d="M4 3h11v11H4zM9 9h11v12H9zM2 6v12M21 6v12M6 22h12" strokeWidth="1.300" /><path d="M0 0h3v3H0zM20 0h3v3h-3zM0 20h3v3H0zM20 20h3v3h-3z" fill={blue} stroke="none" /></I>,
  picture: <I><path d="M2 5h19v18H2z" /><circle cx="16" cy="11" r="3" fill={gold} stroke="none" /></I>,
};

type Cmd = [string, React.ReactNode, ("sub" | "split" | "menu")?];
const commands: Cmd[] = [
  ["<구분 기호>", null],
  ["3차원 회전", ic.cube, "sub"],
  ["SmartArt 그래픽으로 변환", ic.smart, "sub"],
  ["가로 간격을 동일하게", ic.spread],
  ["가운데 맞춤", ic.center],
  ["강조 표시 안 함", null],
  ["개체 가운데 맞춤", ic.ctrV],
  ["개체 가운데 정렬", ic.ctrH],
  ["개체 맞춤", ic.left, "sub"],
  ["개체 선택", ic.cursor],
  ["개체 아래쪽 맞춤", ic.bottom],
  ["개체 오른쪽 맞춤", ic.right],
  ["개체 왼쪽 맞춤", ic.leftO],
  ["개체 위쪽 맞춤", ic.top],
  ["개체 회전", ic.rotate, "sub"],
  ["구역 이름 바꾸기", ic.rename],
  ["구역 제거", ic.remove],
  ["구역 추가", ic.section],
  ["구역", ic.section, "sub"],
  ["굵게", ic.bold],
  ["그라데이션", ic.gradient, "sub"],
  ["그룹 해제", ic.ungroup],
  ["그룹", ic.group],
  ["그리기", null, "menu"],
  ["그림 채우기", ic.picture],
];
const chosen: Cmd[] = [
  ["저장", <SaveIcon key="s" />],
  ["실행 취소", <UndoIcon key="u" />, "split"],
  ["다시 실행", <RedoIcon key="r" />],
  ["처음부터 시작", <ShowIcon key="h" />],
  ["맨 앞으로 가져오기", <SheetIcon key="1" kind="front" size={25} />],
  ["맨 뒤로 보내기", <SheetIcon key="2" kind="back" size={25} />],
  ["앞으로 가져오기", <SheetIcon key="3" kind="forward" size={23} />],
  ["뒤로 보내기", <SheetIcon key="4" kind="backward" size={23} />],
];

const CommandRows = ({ items, on }: { items: Cmd[]; on: number }) => (
  <ul>
    {items.map(([name, icon, more], i) => (
      <li key={name}>
        <Row $on={i === on}>
          <RowIcon>{icon}</RowIcon>
          <RowText $in={name[0] === "<"}>{name}</RowText>
          {(more === "sub" || more === "split") && (
            <SubArrow $split={more === "split"}><Tri d="right" c="#333" w={7} h={12} /></SubArrow>
          )}
          {more === "menu" && (
            <S w={25} h={25}><rect x="1.500" y="1" width="22" height="22" rx="5" fill="#fff" stroke="#333" strokeWidth="1.600" /><path d="M9 16h8l-4 4z" fill="#333" /></S>
          )}
        </Row>
      </li>
    ))}
  </ul>
);

const navTop = ["일반", "언어 교정", "저장", "한글 입력 체계", "언어", "접근성", "고급"];

const OptionsDialog = () => (
  <Dialog role="dialog" aria-label="PowerPoint 옵션">
    <DialogTitle>
      <h1>PowerPoint 옵션</h1>
      <button>?</button>
      <button aria-label="닫기"><S w={16} h={16}><path d="M0 0l16 16M16 0L0 16" stroke="#8f8f8f" /></S></button>
    </DialogTitle>
    <DialogBody>
      <OptionNav>
        {navTop.map((t) => <OptionLink key={t}>{t}</OptionLink>)}
        <NavRule />
        <OptionLink>리본 사용자 지정</OptionLink>
        <OptionLink $on>빠른 실행 도구 모음</OptionLink>
        <NavRule />
        <OptionLink>추가 기능</OptionLink>
        <OptionLink>보안 센터</OptionLink>
      </OptionNav>
      <OptionPanel>
        <PanelTitle>
          <S w={40} h={46}>
            <path d="M1 1h21l8 10v32H1z" fill="#fff" stroke="#777" />
            <path d="M21.500 1v10H30" stroke="#777" />
            <path d="M5 20h21v10H5z" fill="#6b6b6b" />
            <path d="M10 14h11v8H10zM10 27h11v7H10z" fill="#fff" stroke="#777" />
            <path d="M12 29.500h7M12 32h7" stroke={blue} />
            <path d="M24 30h16v16H26l-2-2z" fill="#9463b8" stroke="#fff" />
            <path d="M27 32h10v7H27zM28.500 41h7v4h-7z" fill="#fff" />
            <path d="M30 42h2v3h-2z" fill="#9463b8" />
          </S>
          빠른 실행 도구 모음 사용자 지정
        </PanelTitle>
        <Columns>
          <Picker $col={1}>
            <label htmlFor="src"><span>명령 선택(<u>C</u>):</span><InfoIcon /></label>
            <Select id="src"><option>홈 탭</option></Select>
          </Picker>
          <Picker $col={3}>
            <label htmlFor="dst"><span>빠른 실행 도구 모음 사용자 지정(<u>Q</u>):</span><InfoIcon /></label>
            <Select id="dst"><option>모든 문서(기본값)</option></Select>
          </Picker>
          <LeftStack>
            <ListFrame $h={659}>
              <CommandRows items={commands} on={10} />
              <Bar>
                <div>
                  <button aria-label="위로"><Tri d="up" /></button>
                  <BarThumb />
                </div>
                <button aria-label="아래로"><Tri /></button>
              </Bar>
            </ListFrame>
            <Check><input type="checkbox" defaultChecked /><span>리본 메뉴 아래에 빠른 실행 도구 모음 표시(<u>H</u>)</span></Check>
          </LeftStack>
          <Middle>
            <Push $w={120}><span>추가(<u>A</u>) &gt;&gt;</span></Push>
            <Push $w={120}><span>&lt;&lt; 제거(<u>R</u>)</span></Push>
          </Middle>
          <RightStack>
            <ListFrame $h={580}><CommandRows items={chosen} on={7} /></ListFrame>
            <Push $w={113} $dim disabled><span>수정(<u>M</u>)...</span></Push>
            <CustomRow>
              <span>사용자 지정:</span>
              <Push $w={123} $h={36} $thick><span>원래대로(<u>E</u>)</span><Tri c="#333" /></Push>
              <InfoIcon />
              <ExportRow>
                <Push $w={203} $h={36} $thick><span>가져오기/내보내기(<u>P</u>)</span><Tri c="#333" /></Push>
                <InfoIcon />
              </ExportRow>
            </CustomRow>
          </RightStack>
          <Middle>
            <Push $w={48} $h={36} aria-label="위로 이동"><Tri d="up" c="#333" /></Push>
            <Push $w={48} $h={36} $dim disabled aria-label="아래로 이동"><Tri c={off} /></Push>
          </Middle>
        </Columns>
      </OptionPanel>
    </DialogBody>
    <DialogFoot>
      <Push $w={113}>확인</Push>
      <Push $w={113}>취소</Push>
    </DialogFoot>
  </Dialog>
);

/* ---------- slide thumbnails ---------- */

const Defs = styled.svg`
  position: absolute;
`;

const Noise = () => (
  <Defs width="0" height="0" aria-hidden="true">
    <defs>
      <filter id="leaf" x="0" y="0" width="100%" height="100%" colorInterpolationFilters="sRGB">
        <feTurbulence type="fractalNoise" baseFrequency=".24" numOctaves="3" seed="4" />
        <feColorMatrix values="0 0 0 0 .05  0 0 0 0 .07  0 0 0 0 .07  2.4 0 0 0 -.9" />
        <feComposite in2="SourceGraphic" operator="in" />
      </filter>
      <filter id="patch" x="0" y="0" width="100%" height="100%" colorInterpolationFilters="sRGB">
        <feTurbulence type="fractalNoise" baseFrequency=".02 .016" numOctaves="4" seed="9" />
        <feColorMatrix values="0 0 0 0 .34  0 0 0 0 .28  0 0 0 0 .23  0 4 0 0 -2.100" />
        <feComposite in2="SourceGraphic" operator="in" />
      </filter>
      <filter id="town" x="0" y="0" width="100%" height="100%" colorInterpolationFilters="sRGB">
        <feTurbulence type="fractalNoise" baseFrequency=".2" numOctaves="4" seed="2" />
        <feColorMatrix values="0 0 0 0 .66  0 0 0 0 .66  0 0 0 0 .62  0 7 0 0 -3.800" />
        <feComposite in2="SourceGraphic" operator="in" />
      </filter>
      <filter id="ridge" x="0" y="0" width="100%" height="100%" colorInterpolationFilters="sRGB">
        <feTurbulence type="fractalNoise" baseFrequency=".05" numOctaves="5" seed="6" />
        <feColorMatrix values="0 0 0 0 .27  0 0 0 0 .24  0 0 0 0 .2  0 4 0 0 -1.900" />
        <feComposite in2="SourceGraphic" operator="in" />
      </filter>
      <filter id="soft" x="-30%" y="-30%" width="160%" height="160%"><feGaussianBlur stdDeviation="12" /></filter>
    </defs>
  </Defs>
);

const Tiny = ({ x, y, t, f = 5, c = "#333" }: { x: number; y: number; t: string; f?: number; c?: string }) => (
  <text x={x} y={y} fontSize={f} fontWeight="400" fill={c}>{t}</text>
);

const FieldMap = () => (
  <g>
    <rect x="2" y="33" width="232" height="117" fill="#1e2a25" />
    <path d="M32 33h20v20l-18 8-16 12-8-4 14-18z" fill="#3b322a" />
    <path d="M26 48l16-8 6 6-14 6-12 8-4-4z" fill="#8a5346" />
    <path d="M24 67l26-2 2 12-22 6-5-4z" fill="#7d5844" />
    <path d="M52 37h20l-8 14 10 12 18-4 12-22 14 2-10 14-16 16-24 2-18-14zM54 90l6 30-14 14-16-6 10-24z" fill="#4b3a31" />
    <path d="M2 104l18 10 6 36H2zM34 102l12-4 6 6-14 4z" fill="#4a3c32" />
    <path d="M100 128l16-6-4 28h-24z" fill="#4a3b31" />
    <path d="M120 33c1 20-4 34-4 60s-4 40-6 57h66c-4-30-8-60-10-85s-6-20-4-32z" fill="#1a1a1c" />
    <path d="M162 33h24l-8 40-3 77h-4c-6-50-3-80-9-117z" fill="#24392c" />
    <path d="M186 33h48v117h-58l3-77z" fill="#4a3f39" />
    <path d="M186 33l-8 40-3 77M198 33l-4 116M212 33l-6 117M182 60h52M180 80h52M178 100h56M178 124h50" stroke="#6a5c50" strokeWidth=".8" fill="none" />
    <path d="M204 76c14-8 26 0 26 12s-14 20-26 14-8-20 0-26z" fill="#16211c" />
    <path d="M2 33h118v117H2z" filter="url(#ridge)" opacity=".6" />
    <rect x="2" y="33" width="232" height="117" filter="url(#leaf)" opacity=".5" />
  </g>
);

const ThumbArt = ({ n }: { n: number }) => {
  const full = n === 15 || n === 16;
  const field = n === 18 || n === 19;
  const barY = full ? 24 : 27;
  return (
    <svg width="309" height="175" viewBox="1 1 309 175" aria-hidden="true">
      <path d="M2 8.500h306M2 15.500h306M35.500 3v12M234.500 3v12M268.500 3v12" stroke="#bbb" />
      <path d="M2 175V2.500h306" stroke="#000" fill="none" strokeWidth="1.200" />
      <Tiny x={4} y={7} t="Project Name" f={4} /><Tiny x={38} y={7} t="[KAIA] 공공임무드론" f={4} />
      <Tiny x={4} y={14} t="Screen ID" f={4} />
      <Tiny x={236} y={7} t="Writer" f={4} /><Tiny x={277} y={7} t="은상혁 / 양덕우" f={4} />
      <Tiny x={236} y={14} t="Last updated" f={4} /><Tiny x={282} y={14} t="2022.05" f={4} />
      {full && (
        <>
          <Tiny x={38} y={14} t={n === 15 ? "Main - 단축키" : "Main"} f={4} />
          <path d="M234.500 15v160M242 22v122M234 150.500h74" stroke="#aaa" fill="none" />
          <path d="M235 16h73v6h-73zM235 144h73v7h-73z" fill="#d6d6d6" />
          <Tiny x={263} y={20} t="Description" f={4} /><Tiny x={265} y={149} t="Legends" f={4} />
          <Tiny x={237} y={27} t="①" f={4} />
          <Tiny x={243} y={27} t={n === 15 ? "단축키 정보 버튼" : "마우스 - 키 - 다음틀에 위, 선택될 수 있는"} f={4} />
          {n === 15 && <Tiny x={237} y={33} t="②" f={4} />}
          <Tiny x={243} y={33} t={n === 15 ? "1번의 버튼을 눌렀을 때, 나타나는 키보드" : "화면"} f={4} />
          <Tiny x={243} y={40} t={n === 15 ? "② 표기 위치" : "② 표기 위치"} f={4} />
          <Tiny x={243} y={46} t={n === 15 ? "   ③ 마우스 왼쪽 버튼 표기" : "③ 화면 영역"} f={4} />
          <circle cx="238.500" cy="156" r="2.600" fill="#e11" /><Tiny x={242} y={158} t="Description" />
          <circle cx="275" cy="156" r="2.600" fill="#2874c4" /><Tiny x={279} y={158} t="Link" />
          <circle cx="238.500" cy="166" r="1.900" stroke="#e11" strokeWidth="1.400" fill="none" /><Tiny x={242} y={167} t="Popup" />
          <rect x="273" y="164" width="4" height="4" stroke="#000" fill="none" strokeWidth="1.200" /><Tiny x={279} y={168} t="Image Box" />
          <circle cx="238.500" cy="172" r="2.400" fill="#1d3c78" /><Tiny x={242} y={174} t="Icon" />
        </>
      )}
      {n === 15 && (
        <>
          <rect x="2" y="30" width="232" height="123" fill="#1f1d1b" />
          <path d="M2 70c30-20 50 10 70 20s20 30 0 40-60-10-70 0z" fill="#262a25" />
          <path d="M2 30h232v123H2z" filter="url(#ridge)" opacity=".35" />
          <path d="M2 30h232v123H2z" filter="url(#leaf)" opacity=".5" />
          <path d="M80 31h30l24 16-30 6zM10 60l16-4 14 20 36 10 4 12-50-4zM44 110l28 4 4 16-26-8zM196 142l38-16v18z" filter="url(#town)" opacity=".35" />
          <path d="M90 32l40 16M66 44l6 20-2 12" stroke="#4b443f" strokeWidth="1.600" fill="none" />
          <rect x="100.500" y="60.500" width="36" height="61" stroke="#ff0" fill="none" />
          <path d="M102 63h32v57h-32z" fill="#fff" />
          <Tiny x={104} y={68} t="단축키" f={4} c="#888" />
          {[0, 1, 2, 3, 4, 5, 6, 7, 8, 9].map((i) => (
            <path key={i} d={`M110 ${75 + i * 4.6}h2M114 ${75 + i * 4.6}h${i > 7 ? 3 : 11}`} stroke="#999" />
          ))}
          <circle cx="101" cy="61" r="2" fill="#ff0" stroke="#000" /><circle cx="179" cy="149" r="2" fill="#ff0" stroke="#000" />
          <rect x="178.500" y="149.500" width="9" height="5" stroke="#ff0" fill="none" />
        </>
      )}
      {n === 16 && (
        <>
          <rect x="2" y="30" width="232" height="123" fill="#222c24" />
          <path d="M170 60l64-20v113h-80l30-40z" fill="#36271f" />
          <path d="M2 30h232v123H2z" filter="url(#ridge)" opacity=".5" />
          <path d="M30 40l20 36 30 20 40 6 20 40 8 11" stroke="#77736a" strokeWidth="3" fill="none" />
          <path d="M128 78l30-4 4 30-34 6zM180 84l28-4-14 20zM134 114l10 4 4 16-8 4z" fill="#6d675d" />
          <path d="M2 30h232v123H2z" filter="url(#leaf)" opacity=".7" />
          <path d="M2 36l24 2 16 26 60 10 20 20 26 18 4 38h-16l-14-34-60-10-26 44H2z" filter="url(#town)" opacity=".75" />
          <path d="M4 70h8v8H4zM30 122h12v10H30z" fill="#b5a284" />
          <path d="M66 62l10-2 8 6-8 6zM10 72l8 2-4 6z" fill="#3e6d50" />
          <rect x="68.500" y="112.500" width="41" height="6" stroke="#ff0" fill="#fff" />
          <path d="M70 113h12v5H70z" fill="#4caf50" /><path d="M82 113h15v5H82z" fill="#ff9800" /><path d="M97 113h9v5h-9z" fill="#f44" />
          <circle cx="69" cy="111" r="2" fill="#ff0" stroke="#000" />
        </>
      )}
      {field && (
        <>
          <FieldMap />
          <path d="M60 66h114v46H60z" fill="#fff" /><path d="M60 66h114v14H60z" fill="#009688" />
          <Tiny x={66} y={71} t="Settings" f={4} c="#fff" />
          <circle cx="66" cy="80" r="3.600" fill={n === 18 ? "#1f6fd0" : "#68a5ea"} />
          {n === 19 && <circle cx="82" cy="80" r="3" fill="#3445ad" />}
          <path d="M72 93h6M82 93h9M96 93h3M104 93h4M116 93h8M131 93h6M143 93h4" stroke="#999" strokeWidth=".8" />
          <path d="M82 99h9M96 99h4M104 99h8M116 99h5M131 99h4M143 99h9M126 106h10M142 106h5M152 106h5" stroke="#777" strokeWidth=".8" />
          <circle cx="74" cy="99" r="2.200" fill="#009688" /><circle cx="159" cy="99" r="2.200" fill="#4caf50" /><circle cx="167" cy="99" r="2.200" fill="#f44336" />
        </>
      )}
      {(full || field) && (
        <>
          <rect x="2" y={barY} width="232" height="6" fill={full ? "#1c73d2" : "#1e4f81"} />
          <Tiny x={5} y={barY + 4} t="KETI GCS" f={3} c="#cde" /><Tiny x={118} y={barY + 4} t="CONNECT   DISCONNECT" f={3} c="#bcd" />
          <rect x="2" y={barY + 6} width="60" height="4.500" fill={full ? "#f2f2f2" : "#8f8f8f"} />
          <path d={`M5 ${barY + 8}h34M42 ${barY + 8}h5M51 ${barY + 8}h8`} stroke="#999" strokeWidth=".8" />
        </>
      )}
    </svg>
  );
};

/* ---------- canvas ---------- */

const rulerNums = Array.from({ length: 21 }, (_, i) => 17 - i);
const HorizontalRuler = () => (
  <svg width="100%" height="21" aria-hidden="true">
    {rulerNums.map((v) => {
      const x = 1232 - v * 72.9;
      return (
        <g key={v} transform={`translate(${x} 0)`}>
          {v < 17 && <text y="17" textAnchor="middle" fontSize="18" fontWeight="350" fill="#333">{Math.abs(v)}</text>}
          <path d="M18.500 8v4M54.500 8v4" stroke="#aaa" />
          <path d="M36.500 6v8" stroke="#444" />
        </g>
      );
    })}
  </svg>
);
const VerticalRuler = () => (
  <svg width="21" height="100%" aria-hidden="true">
    {[9, 8, 7, 6, 5].map((v, i) => (
      <g key={v} transform={`translate(0 ${36 + i * 73})`}>
        <text transform="translate(18 0) rotate(-90)" textAnchor="middle" fontSize="18" fontWeight="350" fill="#333">{v}</text>
        <path d="M9 -18.500h3M9 18.500h3" stroke="#aaa" />
        <path d="M7 -33.500h7M7 38.500h7" stroke="#444" />
      </g>
    ))}
  </svg>
);

const SatelliteMap = () => (
  <MapArt>
    <g transform="translate(-635 -538)">
      <rect x="635" y="538" width="1500" height="931" fill="#202b28" />
      <path d="M637 602l25-14 29-10-3 15-16 24-35 4zM640 632l14 2 6 10-10 4zM870 650l12 4-8 8zM838 668l22-10 10-8 14 8 10 10z" fill="#75594a" />
      <path d="M892 656l30-12 30 2 8 22h-60z" fill="#26402f" />
      <path d="M905 573h24l50 70-40-14-24-26zM975 597l38 34 36 20 6 17H880l30-14 34-22z" fill="#42332e" />
      <path d="M956 573h24l62 32 16 26-16 20-60-52z" fill="#3b2e2a" />
      <path d="M1058 625l66-52 20-35h70l-18 22-40 16-30 30-18 62h-66z" fill="#44352f" />
      <path d="M1012 573h108l-58 45-28-20z" fill="#1e2a27" />
      <path d="M1040 600l14 20 8-2-12-20z" fill="#5d6163" />
      <path d="M950 573l90 77 10 18M975 597l-34 34M1040 650l20-30 62-42 10-30 24-10" stroke="#857967" strokeWidth="3" fill="none" />
      <path d="M954 573l86 76" stroke="#3b4a35" strokeWidth="6" />
      <path d="M950 573l90 77M1000 606l-50 50M1016 620l-50 48M1030 634l-34 34" stroke="#6a5b4e" strokeWidth="1" fill="none" />
      <path d="M1200 573q60-20 90 20t-40 46-60-30 M1180 560l80-16" stroke="#24402e" strokeWidth="16" fill="none" opacity=".6" />
      <path d="M1200 548l20-2 10 8-22 4zM1378 540l12 4 2 10-12-4zM1196 650l14 2-8 10zM1222 602l8-2v8z" fill="#5e4a3c" />
      <path d="M1497 600l36 8 18 18 24-4v46h-60z" fill="#55463a" />
      <path d="M635 538h960v130H635z" filter="url(#leaf)" opacity=".6" />
      <path d="M1590 538c-14 16-10 20-10 50l-6 80 26 801h430l-17-53-5-160-8-90-32-363-17-68-17-197z" fill="#1a1a1c" />
      <path d="M1590 538c-14 16-8 24-8 50s-6 50-6 82" stroke="#7b7a6c" strokeWidth="3" fill="none" />
      <path d="M1856 590c6-6 14-4 14 4l8 24-1 20-12-4c-8-16-10-30-9-44z" fill="#22392e" />
      <path d="M1934 538h154v922h-58l-14-50-8-160-8-90-32-363-17-68z" fill="#24332b" />
      <path d="M1996 540l70 4 22 60-60 120-40-70z" filter="url(#patch)" opacity=".8" />
      <path d="M1934 538h154v922h-58l-14-50-8-160-8-90-32-363-17-68z" filter="url(#leaf)" opacity=".5" />
      <path d="M2088 570q-20 30-22 80t-38 96" stroke="#3a5a3c" strokeWidth="3" fill="none" />
      <path d="M2088 660v809h-66l-8-60 10-500 46-150z" fill="#3a332d" />
      <path d="M2088 760v640l-44-10-2-474 34-90z" fill="#504840" />
      <path d="M2046 936l42 4v44l-42-8zM2046 1106h42v50h-42zM2064 826l20-2-4 54-22-6z" fill="#65574b" />
      <path d="M2042 916l46 12v-46l-30-4zM2046 990h16v54h-16zM2046 1045h42v54h-42zM2062 1218h26v50h-26zM2046 1330h42v46h-42z" fill="#3a3331" />
      <path d="M2084 760l-52 150 2 490M2042 916l46 16M2046 986h42M2046 1045h42M2046 1100l42 4M2046 1158h42M2046 1215h42M2046 1270h42M2046 1326h42M2044 1380h44" stroke="#766c5d" strokeWidth="1.500" fill="none" />
      <path d="M2070 760l-45 141 2 505 22 63" stroke="#86796a" strokeWidth="3" fill="none" />
      <path d="M2096 720l-62 190v464" stroke="#1c3a2d" strokeWidth="10" fill="none" />
      <path d="M2088 784l-46 132 3 462" stroke="#6f6656" strokeWidth="2" fill="none" />
      <path d="M2030 1386h58v80h-44z" fill="#343a2f" /><path d="M2034 1402h22v20l-20-4z" fill="#66594f" />
      <path d="M2018 660h70v809h-70z" filter="url(#leaf)" opacity=".3" />
      <path d="M1890 1170l30 30 16 60 14 80-30 10-30-60-10-60zM1850 1330l60 60-40 70z" fill="#3a352a" opacity=".55" filter="url(#soft)" />
      <path d="M825 573v95M1085 573v95M1344 538v130M1604 538v130M1863 538v931M2012 538v130" stroke="#8a8a8a" opacity=".18" />
      <g fill="#212125" fontSize="17" fontWeight="700">
        <text x="1612" y="613">© 2022 Google</text>
        <text x="1880" y="1262" fontSize="13">© 2022 Google</text>
        <text x="1668" y="1407" fontSize="13">© 2022 Google</text>
      </g>
      <path d="M2033 1465h60v4h-60z" fill="#777" />
    </g>
  </MapArt>
);

const Magnifier = ({ plus }: { plus?: boolean }) => (
  <S w={14} h={14}>
    <circle cx="5.500" cy="5.500" r="4" stroke="#222" strokeWidth="1.500" />
    <path d="M8.500 8.500l4 4" stroke="#222" strokeWidth="2" />
    <path d={plus ? "M3.500 5.500h4M5.500 3.500v4" : "M3.500 5.500h4"} stroke="#222" />
  </S>
);

const Picture = () => (
  <Shot>
    <ShotBar>
      <Brand>
        <S w={24} h={22}>
          <rect x="1.500" y="1.500" width="21" height="15" rx="1.500" stroke="#a7abb0" strokeWidth="2" />
          <path d="M5 5h7v5H5zM14 5h5v3h-5zM14 10h5v4h-5zM5 12h7v2H5zM9 17h6v3h2v2H7v-2h2z" fill="#a7abb0" />
        </S>
        KETI GCS
      </Brand>
      <Field><label htmlFor="host">HOST*</label><input id="host" defaultValue="203.253.128.177" /></Field>
      <Field><label htmlFor="gcs">GCS*</label><input id="gcs" defaultValue="KETI_GCS" /></Field>
      <ShotButton $dim disabled>CONNECT</ShotButton>
      <ShotButton>DISCONNECT</ShotButton>
    </ShotBar>
    <MapArea>
      <SatelliteMap />
      <MapTools>
        <Switch $w={161}><input type="checkbox" />드론근접감시</Switch>
        <Switch $w={118}><input type="checkbox" />ADS-B</Switch>
        <NaNBox aria-label="값" defaultValue="NaN" />
        <ZoomButton aria-label="확대"><Magnifier plus /></ZoomButton>
        <ZoomButton aria-label="축소"><Magnifier /></ZoomButton>
      </MapTools>
      <Settings>
        <SettingsHead>
          <Confirm>
            <S w={16} h={14}>
              <path d="M1 1.500h14v3.500a2 2 0 0 0 0 4v3.500H1V9a2 2 0 0 0 0-4z" stroke="#fff" strokeWidth="1.800" />
              <path d="M8 3v2M8 6v2M8 9v2M5 7h1.500M9.500 7H11" stroke="#fff" strokeWidth="1.600" />
            </S>
            확인
          </Confirm>
        </SettingsHead>
        <Card>
          <GcsTable>
            <thead><tr><th>parent_cell</th><th>gcs</th><th>...</th><th>...</th></tr></thead>
            <tbody>
              <tr>
                <td>12</td><td>KETI_GCS</td>
                <td><Round $c="#4caf50" aria-label="편집"><S w={14} h={14}><path d="M1 13v-3l7-7 3 3-7 7zM9 2l1.500-1.500 3 3L12 5z" fill="#fff" /></S></Round></td>
                <td><Round $c="#f44336" aria-label="삭제"><S w={12} h={14}><path d="M1 4h10v9.500H1zM0 1.500h3.500L4.500.500h3l1 1H12V3H0z" fill="#fff" /></S></Round></td>
              </tr>
            </tbody>
          </GcsTable>
          <Pager>
            <label htmlFor="per">Rows per page:</label>
            <select id="per"><option>10</option></select>
            1-1 of 1
            <button aria-label="이전"><S w={8} h={12}><path d="M7 1L1 6l6 5" stroke="#aaa" strokeWidth="1.600" /></S></button>
            <button aria-label="다음"><S w={8} h={12}><path d="M1 1l6 5-6 5" stroke="#aaa" strokeWidth="1.600" /></S></button>
          </Pager>
        </Card>
      </Settings>
    </MapArea>
  </Shot>
);

const colX = Array.from({ length: 11 }, (_, i) => 123 + i * 138.9);
const rowY = Array.from({ length: 10 }, (_, i) => 139.500 + i * 138.9);

const DotGrid = styled(Overlay)`
  mix-blend-mode: difference;
`;

const CanvasMarks = () => (
  <>
    <DotGrid stroke="#fff">
      {colX.map((x) => <path key={x} d={`M${Math.round(x)}.5 15V1400`} strokeDasharray="1 14.440" />)}
      {rowY.map((y) => <path key={y} d={`M0 ${Math.floor(y)}.5H1600`} strokeDasharray="1 14.440" />)}
    </DotGrid>
    <Overlay fill="none">
      <path d="M1204.500 -22V1400" stroke="#a3a3a3" strokeDasharray="4 2" />
      <path d="M0 679.500H1600" stroke="#a3a3a3" strokeDasharray="4 2" />
      <path d="M925.500 168v28" stroke="#999" />
      <circle cx="0" cy="202" r="7" fill="#fff" stroke="#999" strokeWidth="2.500" />
      <circle cx="925.500" cy="202" r="7" fill="#fff" stroke="#999" strokeWidth="2.500" />
      <g transform="translate(925.500 152)">
        <path d="M12.500 -3A11.800 11.800 0 1 0 6 10.500" stroke="#999" strokeWidth="7" />
        <path d="M12.500 -3A11.800 11.800 0 1 0 6 10.500" stroke="#fff" strokeWidth="2.600" />
        <path d="M1 -2h20L12 10z" fill="#fff" stroke="#999" strokeWidth="2.200" />
      </g>
    </Overlay>
  </>
);

/* ---------- ribbon ---------- */

const HighlightTools = styled.div`
  position: absolute;
  right: 4px;
  top: 56px;
  display: flex;
  align-items: center;
  gap: 5px;
  height: 34px;
`;

const RibbonBar = () => (
  <Ribbon>
    <Group $w={201}>
      <GroupBody>
        <Big $w={84}><PasteIcon />붙여넣기<BigCaret><Caret /></BigCaret></Big>
        <Stack>
          <Small><CutIcon />잘라내기</Small>
          <Small><CopyIcon />복사 <Caret /></Small>
          <Small><BrushIcon />서식 복사</Small>
        </Stack>
      </GroupBody>
      <GroupName $launch>클립보드</GroupName>
      <Launcher aria-label="클립보드 옵션"><LaunchIcon /></Launcher>
    </Group>
    <Group $w={233}>
      <GroupBody>
        <Big $w={108}><NewSlideIcon />새 슬라이드<BigCaret><Caret /></BigCaret></Big>
        <Stack>
          <Small><LayoutIcon />레이아웃<Caret /></Small>
          <Small><ResetIcon />다시 설정</Small>
          <Small><SectionIcon />구역<Caret /></Small>
        </Stack>
      </GroupBody>
      <GroupName>슬라이드</GroupName>
    </Group>
    <Group $w={346}>
      <GroupBody $pad={4}>
        <Tools>
          <ToolRow $h={56} $gap={6}>
            <FontBoxes>
              <FontSelect $w={171}><input aria-label="글꼴" /><Caret disabled /></FontSelect>
              <FontSelect $w={68}><input aria-label="글꼴 크기" /><Caret disabled /></FontSelect>
            </FontBoxes>
            <ToolRow $h={32} $gap={7}>
              <Glyph aria-label="크게"><S w={22} h={24}><text x="0" y="20" fontSize="17" fill="#a3a3a3">가</text><path d="M16 5l3-4 3 4z" fill="#a3a3a3" /></S></Glyph>
              <Glyph aria-label="작게"><S w={22} h={24}><text x="0" y="20" fontSize="16" fill="#a3a3a3">가</text><path d="M15 1h6l-3 4z" fill="#a3a3a3" /></S></Glyph>
              <Rule />
              <Glyph aria-label="서식 지우기"><S w={24} h={24}><text x="0" y="15" fontSize="17" fill="#a3a3a3">가</text><path d="M9 20l9-11 6 3-8 11h-5z" fill="#c4c1c4" stroke="#f3f3f3" /></S></Glyph>
            </ToolRow>
          </ToolRow>
          <ToolRow $h={34} $gap={12} $pad={6}>
            <Glyph $kind="bold">가</Glyph>
            <Glyph $kind="italic">가</Glyph>
            <Glyph $kind="under">가</Glyph>
            <Glyph $kind="shadow">S</Glyph>
            <ToolRow $h={30} $gap={4}>
              <Glyph $kind="strike">가나다</Glyph>
              <ToolRow $h={30} $gap={0}><Glyph $kind="arrows">가나</Glyph><Caret disabled /></ToolRow>
              <ToolRow $h={30} $gap={0}><Glyph>Aa</Glyph><Caret disabled /></ToolRow>
            </ToolRow>
          </ToolRow>
        </Tools>
      </GroupBody>
      <GroupName $launch>글꼴</GroupName>
      <Launcher aria-label="글꼴 옵션"><LaunchIcon c="#aaa" /></Launcher>
      <HighlightTools>
        <Rule />
        <Glyph aria-label="형광펜"><S w={26} h={26}><text x="1" y="14" fontSize="13" fill="#a3a3a3">갸</text><path d="M22 2L10 14l-2 5 5-2L25 5z" fill={grey} /><path d="M0 22h25v4H0z" fill="#e3dfe5" /></S></Glyph>
        <Caret disabled />
        <Glyph $kind="bar">가</Glyph>
        <Caret disabled />
      </HighlightTools>
    </Group>
    <Group $w={403}>
      <GroupBody $pad={8}>
        <Tools $w={211}>
          <ToolRow $h={54} $gap={4}>
            <ToolRow $h={30} $gap={3}><BulletIcon /><Caret disabled /></ToolRow>
            <ToolRow $h={30} $gap={3}><NumberIcon /><Caret disabled /></ToolRow>
            <ToolRow $h={30} $gap={8}>
              <Rule />
              <IndentIcon out /><IndentIcon />
              <Rule />
              <ToolRow $h={30} $gap={1}><SpacingIcon /><Caret disabled /></ToolRow>
            </ToolRow>
          </ToolRow>
          <ToolRow $h={34} $gap={8}>
            <Lines rows={[[0, 20], [0, 15], [0, 20], [0, 15], [0, 20], [0, 15]]} />
            <Lines rows={[[0, 20], [3, 17], [0, 20], [3, 17], [0, 20], [3, 17]]} />
            <Lines rows={[[0, 20], [5, 20], [0, 20], [5, 20], [0, 20], [5, 20]]} />
            <Lines rows={[[0, 20], [0, 20], [0, 20], [0, 20], [0, 20], [0, 20]]} />
            <SpreadIcon />
            <Rule />
            <ToolRow $h={30} $gap={2}><ColumnsIcon /><Caret disabled /></ToolRow>
          </ToolRow>
        </Tools>
        <Stack>
          <Small $off><DirIcon />텍스트 방향 <Caret disabled /></Small>
          <Small $off><FitIcon />텍스트 맞춤 <Caret disabled /></Small>
          <Small $off><SmartIcon />SmartArt로 변환 <Caret disabled /></Small>
        </Stack>
      </GroupBody>
      <GroupName $launch>단락</GroupName>
      <Launcher aria-label="단락 옵션"><LaunchIcon c="#aaa" /></Launcher>
    </Group>
    <Group $w={494}>
      <GroupBody $pad={5}>
        <Gallery>
          <GalleryGrid>
            {shapePaths.map((p, i) => (
              <svg key={i} width="24" height="24" viewBox="0 0 24 24" fill="#f4f0f7" stroke="#a9a6a9" strokeWidth="1.200" aria-hidden="true">{p}</svg>
            ))}
          </GalleryGrid>
          <GalleryScroll>
            <button aria-label="이전 도형"><Tri d="up" c="#bbb" w={8} h={5} /></button>
            <button aria-label="다음 도형"><Tri c="#bbb" w={8} h={5} /></button>
            <button aria-label="모든 도형"><S w={10} h={8}><path d="M0 1h10" stroke="#bbb" /><path d="M1 3h8L5 8z" fill="#bbb" /></S></button>
          </GalleryScroll>
        </Gallery>
        <Big $w={66}><SheetIcon kind="align" size={44} />정렬<BigCaret><Caret /></BigCaret></Big>
        <Big $w={70} $off><StyleIcon />빠른<span>스타일<Caret disabled /></span></Big>
        <Stack $row={31}>
          <Small $off><FillIcon />도형 채우기 <Caret disabled /></Small>
          <Small $off><OutlineIcon />도형 윤곽선 <Caret disabled /></Small>
          <Small $off><EffectIcon />도형 효과 <Caret disabled /></Small>
        </Stack>
      </GroupBody>
      <GroupName $launch>그리기</GroupName>
      <Launcher aria-label="그리기 옵션"><LaunchIcon c="#aaa" /></Launcher>
    </Group>
    <Group $w={116}>
      <GroupBody $pad={7}>
        <Stack $row={31}>
          <Small><FindIcon />찾기</Small>
          <Small><SwapIcon />바꾸기 <Caret /></Small>
          <Small><CursorIcon />선택<Caret /></Small>
        </Stack>
      </GroupBody>
      <GroupName>편집</GroupName>
    </Group>
    <Group $w={293}>
      <GroupBody $pad={6}>
        <Big $w={80} $off><SheetIcon kind="front" dim size={44} /><span>맨 앞으로</span><span>가져오기</span></Big>
        <Big $w={68} $off><SheetIcon kind="back" dim size={44} /><span>맨 뒤로</span><span>보내기</span></Big>
        <Big $w={72} $off><SheetIcon kind="forward" dim size={44} /><span>앞으로</span><span>가져오기</span></Big>
        <Big $w={64} $off><SheetIcon kind="backward" dim size={44} /><span>뒤로</span><span>보내기</span></Big>
      </GroupBody>
      <GroupName>새 그룹</GroupName>
    </Group>
  </Ribbon>
);

export default function App() {
  return (
    <Window>
      <GlobalStyle />
      <Noise />
      <TabBar>
        <Tab $look="first">파일</Tab>
        <Tab $look="active">홈</Tab>
        {["삽입", "디자인", "전환", "애니메이션", "슬라이드 쇼", "검토", "보기", "도움말"].map((t) => <Tab key={t}>{t}</Tab>)}
        <Tab $look="context">서식</Tab>
        <TellMe>
          <S w={20} h={32}>
            <path d="M6 22c0-6-4-7-4-13a8 8 0 0 1 16 0c0 6-4 7-4 13z" stroke="#fff" strokeWidth="1.800" />
            <path d="M6 25h8M7 29h6" stroke="#fff" strokeWidth="2" />
          </S>
          어떤 작업을 원하시나요?
        </TellMe>
      </TabBar>
      <RibbonBar />
      <QuickBar>
        <button aria-label="저장"><SaveIcon /></button>
        <UndoPair><button aria-label="실행 취소"><UndoIcon /></button><Caret /></UndoPair>
        <button aria-label="다시 실행"><RedoIcon /></button>
        <button aria-label="처음부터 시작"><ShowIcon /></button>
        <button aria-label="뒤로 보내기" disabled><SheetIcon kind="backward" dim size={24} /></button>
        <button aria-label="도구 모음 사용자 지정"><S w={20} h={10}><path d="M5 1h9" stroke="#5c5c5c" /><path d="M5 4h9l-4.500 5z" fill="#5c5c5c" /></S></button>
      </QuickBar>
      <Workspace>
        <ThumbPane>
          <ThumbList>
            {[15, 16, 17, 18, 19, 20, 21].map((n) => (
              <ThumbItem key={n} $on={n === 18}>
                <ThumbNo>{n}</ThumbNo>
                <ThumbFrame $on={n === 18} aria-label={`슬라이드 ${n}`}><ThumbArt n={n} /></ThumbFrame>
              </ThumbItem>
            ))}
          </ThumbList>
          <PaneScroll><button aria-label="위로"><Tri d="up" /></button></PaneScroll>
        </ThumbPane>
        <Editor>
          <RulerV><VerticalRuler /></RulerV>
          <Stage>
            <RulerH><HorizontalRuler /></RulerH>
            <Slide>
              <Info>
                <tbody>
                  <tr><th>Project Name</th><td><Latin>[KAIA]</Latin> <Misspelt>공공임무드론</Misspelt></td></tr>
                  <tr><th>Screen ID</th><td><Holder>제목을 추가하려면 클릭하십시오.</Holder></td></tr>
                </tbody>
              </Info>
              <Blank />
              <Picture />
              <CanvasMarks />
            </Slide>
          </Stage>
        </Editor>
      </Workspace>
      <OptionsDialog />
    </Window>
  );
}
